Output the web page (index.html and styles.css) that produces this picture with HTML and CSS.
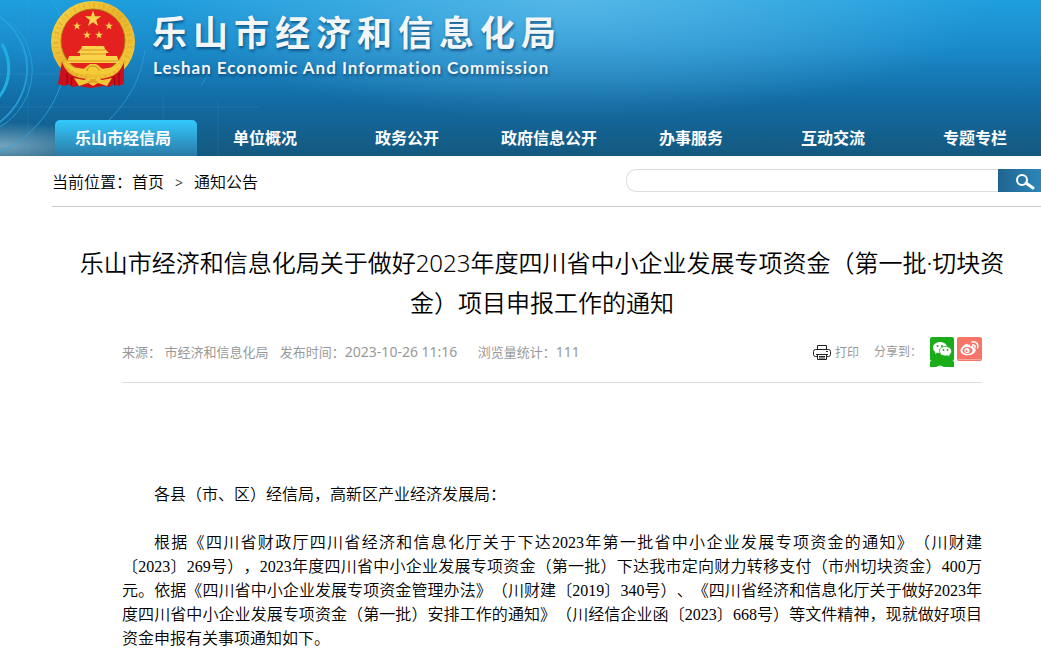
FILE: index.html
```html
<!DOCTYPE html>
<html lang="zh-CN">
<head>
    <meta charset="UTF-8">
    <meta name="viewport" content="width=device-width, initial-scale=1.0">
    <title>乐山市经济和信息化局</title>
    <link rel="stylesheet" href="styles.css">
</head>
<body>

<header class="header">
    <svg class="header-lines" width="620" height="156" viewBox="0 0 620 156" fill="none" aria-hidden="true">
        <defs>
            <radialGradient id="glow">
                <stop offset="0" stop-color="#b5d3e2" stop-opacity=".6"/>
                <stop offset="1" stop-color="#b5d3e2" stop-opacity="0"/>
            </radialGradient>
        </defs>
        <ellipse cx="0" cy="146" rx="110" ry="24" fill="url(#glow)"/>
        <path d="M2 44c9 15 10 37-3 53" stroke="#1fb0e0" stroke-width="3"/>
        <path d="M0 17c34 24 38 75 0 105" stroke="#27a5dc" stroke-width="2" opacity=".8"/>
        <path d="M10 22c34 28 28 84-12 106" stroke="#27a5dc" opacity=".8"/>
        <path d="M52 0c33 50 8 125-52 152" stroke="#2ba9df" opacity=".8"/>
        <path d="M145 50c-4 28-16 50-36 70" stroke="#2b9dd6" opacity=".8"/>
        <path d="M209 70q-3 8-8 16" stroke="#2b9dd6" opacity=".6"/>
        <path d="M0 25H120M0 74H60M0 107H260M28 0V156M163 95V156M218 100V156" stroke="#4fb2e4" opacity=".15"/>
    </svg>

    <div class="brand">
        <svg class="emblem" width="86" height="90" viewBox="0 0 86 90" aria-hidden="true">
            <defs>
                <linearGradient id="gold" x1="0" y1="0" x2="1" y2="1">
                    <stop offset="0" stop-color="#f8d84a"/>
                    <stop offset=".5" stop-color="#e9b42b"/>
                    <stop offset="1" stop-color="#f6cf3c"/>
                </linearGradient>
                <path id="star" d="M0-10 2.300-3.100H9.500L3.700 1.200 5.900 8.100 0 3.900-5.900 8.100-3.700 1.200-9.500-3.100H-2.300z"/>
            </defs>
            <ellipse cx="43" cy="42" rx="42" ry="41" fill="url(#gold)"/>
            <ellipse cx="43" cy="42" rx="37" ry="37" fill="none" stroke="#c98f1b" stroke-width="5" stroke-dasharray="1 3 2 4" opacity=".3"/>
            <circle cx="43" cy="41" r="32" fill="#e5211f" stroke="#b07a18"/>
            <g fill="#fbd44a">
                <use href="#star" transform="translate(43 19) scale(.86)"/>
                <use href="#star" transform="translate(27 26) scale(.42)"/>
                <use href="#star" transform="translate(59 26) scale(.42)"/>
                <use href="#star" transform="translate(37 35) scale(.42)"/>
                <use href="#star" transform="translate(49 35) scale(.42)"/>
                <path d="M32 46h22l1 3 4 4h-3v3h11l2 7H17l2-7h11v-3h-3l4-4z"/>
            </g>
            <path d="M31 50h24M30 54h26M18 61h50" stroke="#d98f1c"/>
            <!-- drapery on both sides -->
            <path d="M12 62c3 9 9 14 18 16l13 2 13-2c9-2 15-7 18-16v22l-6 2-4-2-5 3-5-1-13 2-13-2-5 1-5-3-4 2-6-2z" fill="#cf101a"/>
            <path d="M17 73v12M22 77l-1 9M69 73v12M64 77l1 9" stroke="#860a12"/>
            <!-- lower wreath, gear and bow -->
            <path d="M13 61c4 4 9 7 16 7 3 1 5 1 6 0l2-2 3-2h6l3 2 2 2c1 1 3 1 6 0 7 0 12-3 16-7-4 8-11 12-19 13-4 0-7-1-11 1-4-2-7-1-11-1-8-1-15-5-19-13z" fill="#f5cb38"/>
            <path d="M37 71a6 5 0 0 1 12 0" fill="none" stroke="#c98a1a"/>
            <path d="M24 78l10 2 4-2h10l4 2 10-2-5 8-9-3-5 3-5-3-9 3z" fill="#f1c637"/>
            <path d="M38 82h10M40 80h6" stroke="#c98a1a"/>
        </svg>
        <div class="brand-text">
            <div class="brand-name">乐山市经济和信息化局</div>
            <div class="brand-en">Leshan Economic And Information Commission</div>
        </div>
    </div>

    <nav class="nav">
        <a class="nav-item active" href="#">乐山市经信局</a>
        <a class="nav-item" href="#">单位概况</a>
        <a class="nav-item" href="#">政务公开</a>
        <a class="nav-item" href="#">政府信息公开</a>
        <a class="nav-item" href="#">办事服务</a>
        <a class="nav-item" href="#">互动交流</a>
        <a class="nav-item" href="#">专题专栏</a>
    </nav>
</header>

<div class="location">
    <div class="crumbs">
        <span>当前位置：</span><a href="#">首页</a><span class="arrow">&gt;</span><a href="#">通知公告</a>
    </div>
    <form class="search">
        <input class="search-input" type="text" aria-label="搜索">
        <button class="search-button" type="button" aria-label="搜索">
            <svg width="20" height="18" viewBox="0 0 20 18" fill="none" stroke="#fff" aria-hidden="true">
                <circle cx="7" cy="7" r="5" stroke-width="2"/>
                <path d="M11 10l7 5" stroke-width="3" stroke-linecap="round"/>
            </svg>
        </button>
    </form>
</div>

<main class="article">
    <h1 class="title">乐山市经济和信息化局关于做好2023年度四川省中小企业发展专项资金（第一批·切块资金）项目申报工作的通知</h1>

    <div class="meta">
        <div class="meta-info">
            <span>来源：</span>
            <span>市经济和信息化局</span>
            <span class="date">发布时间：<span class="num">2023-10-26 11:16</span></span>
            <span class="views">浏览量统计：<span class="num">111</span></span>
        </div>
        <div class="meta-tools">
            <a class="print" href="#">
                <svg width="18" height="16" viewBox="0 0 18 16" fill="none" stroke="#222" aria-hidden="true">
                    <path d="M4.500 4.500v-4h9v4M4 11.500H2.500a2 2 0 0 1-2-2v-3a2 2 0 0 1 2-2h13a2 2 0 0 1 2 2v3a2 2 0 0 1-2 2H14M4.500 9.500h9v5h-9zM3 9.500h12M6 11.500h6M6 13h6M13 6.500h2"/>
                </svg>打印</a>
            <span class="share-label">分享到：</span>
            <a class="share wechat" href="#" aria-label="微信">
                <svg width="24" height="30" viewBox="0 0 24 30" aria-hidden="true">
                    <rect width="24" height="24" rx="2" fill="#1aad19"/>
                    <path d="M0 30v-6h24v6z" fill="#1aad19"/>
                    <path d="M0 23q0 1 2 1h20q2 0 2-1v2H0z" fill="#7ed07d"/>
                    <path d="M1 24.500h22" stroke="#1aad19"/>
                    <path d="M6 30q4-3 8 0z" fill="#d8f3d8"/>
                    <path d="M10 5c-4 0-7 2.500-7 5.500 0 2 1 3.500 2.500 4.500L5 17l2.500-1.300 2.500.400c4 0 7-2.500 7-5.600S14 5 10 5z" fill="#fff"/>
                    <path d="M15.500 9.500c-3.500 0-6 2-6 4.800s2.500 4.700 6 4.700l2-.300L20 20l-.500-2c1.300-1 2-2.200 2-3.700 0-2.800-2.500-4.800-6-4.800z" fill="#fff" stroke="#1aad19" stroke-width=".8"/>
                    <circle cx="7.500" cy="9" r="1" fill="#1aad19"/><circle cx="12" cy="9" r="1" fill="#1aad19"/>
                    <circle cx="13.500" cy="13" r=".9" fill="#1aad19"/><circle cx="17.500" cy="13" r=".9" fill="#1aad19"/>
                </svg>
            </a>
            <a class="share weibo" href="#" aria-label="微博">
                <svg width="25" height="24" viewBox="0 0 25 24" aria-hidden="true">
                    <rect width="25" height="24" rx="2" fill="#f67568"/>
                    <path d="M1 22.500h23" stroke="#fba59c"/>
                    <path d="M11 8c1-.800 2.500-.500 2 1.500 2-.900 4-.700 3.500 1.300 2.500.700 2.800 2.700 1.500 4.400-1.500 2-4.500 3-7.500 3-4 0-7-1.800-7-4.500C3.500 11 8 6.500 10 6.800c.800.100 1 .600 1 1.200z" fill="#fff"/>
                    <ellipse cx="10.500" cy="13.500" rx="5" ry="3.400" fill="#f67568"/>
                    <circle cx="10" cy="13.600" r="2.600" fill="#fff"/>
                    <circle cx="9.500" cy="14" r="1" fill="#f67568"/>
                    <path d="M15.500 8c2-.400 3 1 2.500 2.500M15 5c4-.900 7 2.500 5.500 6" fill="none" stroke="#fff" stroke-width="1.500" stroke-linecap="round"/>
                </svg>
            </a>
        </div>
    </div>

    <div class="content">
        <p>各县（市、区）经信局，高新区产业经济发展局：</p>
        <p>根据《四川省财政厅四川省经济和信息化厅关于下达2023年第一批省中小企业发展专项资金的通知》（川财建〔2023〕269号），2023年度四川省中小企业发展专项资金（第一批）下达我市定向财力转移支付（市州切块资金）400万元。依据《四川省中小企业发展专项资金管理办法》（川财建〔2019〕340号）、《四川省经济和信息化厅关于做好2023年度四川省中小企业发展专项资金（第一批）安排工作的通知》（川经信企业函〔2023〕668号）等文件精神，现就做好项目资金申报有关事项通知如下。</p>
    </div>
</main>

</body>
</html>
```
FILE: styles.css
```css
* {
    box-sizing: border-box;
}

body {
    margin: 0;
    background-color: #fff;
    color: #000;
    font-family: "Noto Sans", "Noto Sans CJK SC", sans-serif;
    font-size: 16px;
    text-spacing-trim: space-all;
    overflow-x: hidden;
}

a {
    color: inherit;
    text-decoration: none;
}

/* Header */
.header {
    position: relative;
    overflow: hidden;
    background:
        radial-gradient(ellipse 420px 120px at 55% 0, rgba(120, 200, 238, 0.6), rgba(110, 190, 230, 0)),
        linear-gradient(#1f9edd 0, #1a8bcb 30%, #126ba3 65%, #14597f 100%);
}

.header-lines {
    position: absolute;
    top: 0;
    left: 0;
}

.brand {
    position: relative;
    display: flex;
    gap: 16px;
    height: 120px;
    padding-left: 50px;
}

.brand-text {
    padding-top: 9px;
    color: #f2f6f9;
    text-shadow: 1px 2px 3px rgba(0, 40, 80, 0.6);
    white-space: nowrap;
}

.brand-name {
    font-size: 35px;
    font-weight: bold;
    line-height: 48px;
    letter-spacing: 6px;
}

.brand-en {
    padding-left: 1px;
    font-family: Lato, sans-serif;
    font-size: 17px;
    font-weight: bold;
    line-height: 22px;
    letter-spacing: 1px;
}

.nav {
    position: relative;
    display: flex;
    padding-left: 55px;
}

.nav-item {
    flex: 0 0 142px;
    height: 36px;
    padding-right: 6px;
    color: #fff;
    font-weight: bold;
    line-height: 36px;
    text-align: center;
}

.nav-item.active {
    border-radius: 5px 5px 0 0;
    background: linear-gradient(#33c9fd, #2a7ba6);
}

/* Breadcrumb and search */
.location {
    display: flex;
    justify-content: space-between;
    align-items: center;
    height: 51px;
    margin-left: 52px;
    padding-bottom: 1px;
    border-bottom: 1px solid #ccc;
}

.crumbs {
    font-weight: 350;
}

.arrow {
    margin: 0 11px;
    font-size: 14px;
}

.search {
    display: flex;
    width: 42%;
    max-width: 415px;
    height: 23px;
}

.search-input {
    flex: 1;
    min-width: 0;
    padding: 0 10px;
    border: 1px solid #ddd;
    border-right: 0;
    border-radius: 10px 0 0 10px;
    outline: none;
}

.search-button {
    width: 43px;
    padding: 3px 0 0 17px;
    border: 0;
    background: linear-gradient(to right, #20648f, #2c87b9);
    text-align: left;
}

.search-button svg {
    display: block;
}

/* Article */
.article {
    padding: 36px 9px 0 52px;
}

.title {
    margin: 0 20px;
    font-size: 24px;
    font-weight: 350;
    line-height: 40px;
    text-align: center;
}

.meta {
    display: flex;
    justify-content: space-between;
    height: 60px;
    margin: 0 50px 0 70px;
    border-bottom: 1px solid #ddd;
    color: #999;
    font-size: 13px;
    line-height: 58px;
    white-space: nowrap;
}

.num {
    font-size: 14px;
}

.date {
    margin-left: 8px;
}

.views {
    margin-left: 17px;
}

.meta-tools {
    display: flex;
    font-size: 12px;
}

.print {
    display: flex;
    align-items: center;
    gap: 4px;
}

.share-label {
    margin: 0 8px 0 15px;
}

.share {
    padding-top: 14px;
    line-height: 0;
}

.weibo {
    margin-left: 3px;
}

.content {
    margin: 100px 50px 0 70px;
    font-family: "Liberation Serif", "Noto Sans CJK SC", serif;
    font-weight: 350;
    line-height: 24px;
    text-align: justify;
}

.content p {
    margin: 0 0 24px;
    text-indent: 2em;
}
```
